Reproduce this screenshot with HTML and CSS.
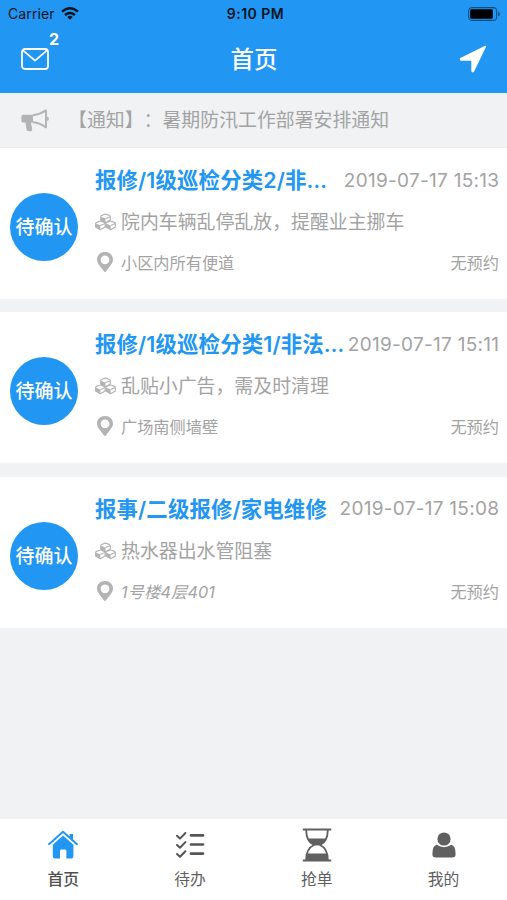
FILE: index.html
```html
<!DOCTYPE html>
<html lang="zh-CN">
<head>
    <meta charset="UTF-8">
    <meta name="viewport" content="width=device-width, initial-scale=1.0">
    <title>首页</title>
    <link rel="stylesheet" href="styles.css">
</head>
<body>

<!-- 公用图标 -->
<svg class="sprite" width="0" height="0">
    <symbol id="icon-cubes" viewBox="0 0 22 18">
        <g fill="#fff" stroke="#b3b3b3" stroke-width="1.2" stroke-linejoin="round">
            <path d="M6 3.4 Q6 2.6 7 2.2 L10 1 Q11 .6 12 1 L15 2.2 Q16 2.6 16 3.4 V7 L11 9.8 6 7Z"/>
            <path d="M.7 10.6 Q.7 9.8 1.6 9.4 L4.7 8.2 Q5.6 7.8 6.6 8.2 L9.6 9.4 Q10.6 9.8 10.6 10.6 V14.2 L5.6 17.2 .7 14.2Z"/>
            <path d="M11.4 10.6 Q11.4 9.8 12.4 9.4 L15.4 8.2 Q16.4 7.8 17.4 8.2 L20.4 9.4 Q21.3 9.8 21.3 10.6 V14.2 L16.4 17.2 11.4 14.2Z"/>
        </g>
        <path d="M6 3.4 L11 5.4 V9.8 L6 7.4Z M.7 10.6 L5.6 12.6 V17.2 L.7 14.6Z M11.4 10.6 L16.4 12.6 V17.2 L11.4 14.6Z" fill="#b3b3b3"/>
        <path d="M11 5.4 L16 3.4 M5.6 12.6 L10.6 10.6 M16.4 12.6 L21.3 10.6" stroke="#b3b3b3" stroke-width="1.1"/>
    </symbol>
    <symbol id="icon-pin" viewBox="0 0 16 20">
        <path fill-rule="evenodd" fill="#b3b3b3" d="M8 0 C3.4 0 0 3.3 0 7.6 C0 12 4.4 15.4 6.8 19.2 Q8 20.6 9.2 19.2 C11.6 15.4 16 12 16 7.6 C16 3.3 12.6 0 8 0Z M8 3.4 A4.4 4.4 0 1 1 8 12.2 A4.4 4.4 0 1 1 8 3.4Z"/>
    </symbol>
</svg>

<header>
    <div class="status-bar">
        <div class="carrier">
            <span>Carrier</span>
            <svg width="18" height="13" viewBox="0 0 18 13" fill="none" stroke="#061420" stroke-width="2.4">
                <path d="M1 4.7 Q9 -2.2 17 4.7"/>
                <path d="M4 8 Q9 3.8 14 8"/>
                <path d="M6.3 10 Q9 7.7 11.7 10 L9 12.8Z" fill="#061420" stroke="none"/>
            </svg>
        </div>
        <div class="clock">9:10 PM</div>
        <svg class="battery" width="33" height="14" viewBox="0 0 33 14">
            <rect x=".6" y=".6" width="28" height="12.8" rx="3.4" fill="none" stroke="#0f4f83" stroke-width="1.1"/>
            <rect x="2.2" y="2.2" width="22.6" height="9.6" rx="1.2" fill="#000"/>
            <path d="M30.2 4.8 Q32 5.6 32 7 Q32 8.4 30.2 9.2Z" fill="#0f4f83"/>
        </svg>
    </div>
    <div class="nav-bar">
        <div class="mail">
            <svg width="28" height="22" viewBox="0 0 28 22" fill="none" stroke="#fff" stroke-width="1.8" stroke-linejoin="round">
                <rect x="1" y="1" width="26" height="20" rx="3"/>
                <path d="M2 2.4 L14 12.6 26 2.4"/>
            </svg>
            <span class="badge">2</span>
        </div>
        <h1>首页</h1>
        <svg class="locate" width="28" height="28" viewBox="0 0 28 28">
            <path d="M26.4 1.4 L1.6 13.6 Q1.2 14.8 2 15 H13 V26 Q13.3 27.2 14.4 26.4Z" fill="#fff" stroke="#fff" stroke-width="1.4" stroke-linejoin="round"/>
        </svg>
    </div>
</header>

<div class="notice">
    <svg width="28" height="23" viewBox="0 0 28 23">
        <path d="M2 5.8 H12 V13.6 H10.4 Q9.6 15.6 10.8 17 L11.2 21.4 Q8.4 23.2 5.8 21.6 L4.4 13.6 H2 Q.4 13.6 .4 12 V7.4 Q.4 5.8 2 5.8Z" fill="#b3b3b3"/>
        <path d="M12 6.2 Q19 5.4 25 1.4 V18.4 Q19 14 12 13.3" fill="none" stroke="#b3b3b3" stroke-width="1.9" stroke-linejoin="round"/>
        <path d="M26 7.4 Q28 8 28 9.8 Q28 11.6 26 12Z" fill="#b3b3b3"/>
    </svg>
    <span class="notice-label">【通知】：</span>
    <span>暑期防汛工作部署安排通知</span>
</div>

<main>
    <div class="card">
        <div class="state">待确认</div>
        <div class="info">
            <div class="line title-line">
                <h2>报修/1级巡检分类2/非…</h2>
                <time>2019-07-17 15:13</time>
            </div>
            <div class="line desc">
                <svg class="cubes"><use href="#icon-cubes"/></svg>
                <span>院内车辆乱停乱放，提醒业主挪车</span>
            </div>
            <div class="line place">
                <svg class="pin"><use href="#icon-pin"/></svg>
                <span>小区内所有便道</span>
                <span class="booking">无预约</span>
            </div>
        </div>
    </div>

    <div class="card">
        <div class="state">待确认</div>
        <div class="info">
            <div class="line title-line">
                <h2>报修/1级巡检分类1/非法…</h2>
                <time>2019-07-17 15:11</time>
            </div>
            <div class="line desc">
                <svg class="cubes"><use href="#icon-cubes"/></svg>
                <span>乱贴小广告，需及时清理</span>
            </div>
            <div class="line place">
                <svg class="pin"><use href="#icon-pin"/></svg>
                <span>广场南侧墙壁</span>
                <span class="booking">无预约</span>
            </div>
        </div>
    </div>

    <div class="card">
        <div class="state">待确认</div>
        <div class="info">
            <div class="line title-line">
                <h2>报事/二级报修/家电维修</h2>
                <time>2019-07-17 15:08</time>
            </div>
            <div class="line desc">
                <svg class="cubes"><use href="#icon-cubes"/></svg>
                <span>热水器出水管阻塞</span>
            </div>
            <div class="line place">
                <svg class="pin"><use href="#icon-pin"/></svg>
                <em>1号楼4层401</em>
                <span class="booking">无预约</span>
            </div>
        </div>
    </div>
</main>

<!-- 底部导航 -->
<footer>
    <div class="tab active">
        <svg width="30" height="36" viewBox="0 0 30 36">
            <path d="M1 17.2 L15 4.8 29 17.2" fill="none" stroke="#2196f3" stroke-width="1.9" stroke-linecap="round" stroke-linejoin="round"/>
            <path d="M21.6 7 H25 V14 L21.6 11Z" fill="#2196f3"/>
            <path d="M15 8.6 L25.4 17.8 V29.6 Q25.4 31.4 23.6 31.4 H18.4 V23.8 Q18.4 22.4 17 22.4 H13.4 Q12 22.4 12 23.8 V31.4 H6.6 Q4.8 31.4 4.8 29.6 V17.8Z" fill="#2196f3"/>
        </svg>
        <span>首页</span>
    </div>
    <div class="tab">
        <svg width="30" height="36" viewBox="0 0 30 36" fill="none" stroke="#555" stroke-linecap="round" stroke-linejoin="round">
            <path d="M2 8.8 L5 11.6 10.4 6 M2 17.9 L5 20.7 10.4 15.1 M2 27 L5 29.8 10.4 24.2" stroke-width="2"/>
            <path d="M16 8.4 H28 M16 17.5 H28 M16 26.6 H28" stroke-width="2.7"/>
        </svg>
        <span>待办</span>
    </div>
    <div class="tab">
        <svg width="30" height="36" viewBox="0 0 30 36">
            <path d="M.8 2.4 H29.2 M.8 33.6 H29.2" stroke="#606060" stroke-width="2"/>
            <path d="M4.2 3 C4.2 11 6.6 15.6 12 18 C6.6 20.4 4.2 25 4.2 33 M25.8 3 C25.8 11 23.4 15.6 18 18 C23.4 20.4 25.8 25 25.8 33" fill="none" stroke="#606060" stroke-width="1.8"/>
            <path d="M5.4 11.4 H24.6 C23.2 15.4 21 17.2 17.8 18 Q15 18.8 12.2 18 C9 17.2 6.8 15.4 5.4 11.4Z M4.6 26.6 H25.4 L26 33.6 H4Z" fill="#606060"/>
        </svg>
        <span>抢单</span>
    </div>
    <div class="tab">
        <svg width="30" height="36" viewBox="0 0 30 36">
            <path d="M7.6 17.8 Q15 22.6 22.4 17.8 Q26.6 18.6 26.6 27 Q26.6 30.6 23.4 30.6 H6.6 Q3.4 30.6 3.4 27 Q3.4 18.6 7.6 17.8Z" fill="#606060"/>
            <circle cx="15" cy="12" r="6.6" fill="#606060"/>
        </svg>
        <span>我的</span>
    </div>
</footer>

</body>
</html>
```
FILE: styles.css
```css
* {
    box-sizing: border-box;
}
body {
    font-family: Inter, "Noto Sans CJK SC", sans-serif;
    text-spacing-trim: space-all;
    margin: 0;
    height: 900px;
    display: flex;
    flex-direction: column;
    background: #f0f2f4;
    color: #a3a3a3;
    overflow: hidden;
}
.sprite {
    position: absolute;
}
svg {
    display: block;
    flex-shrink: 0;
}
header {
    height: 93px;
    background: #2196f3;
    color: white;
}
.status-bar {
    height: 27px;
    padding: 0 6px 0 8px;
    display: grid;
    grid-template-columns: 1fr auto 1fr;
    align-items: center;
    color: #061420;
    font-size: 14px;
}
.carrier {
    display: flex;
    align-items: center;
    gap: 6px;
    letter-spacing: 0.1px;
}
.clock {
    padding-left: 2px;
    font-weight: 600;
    font-size: 14px;
    letter-spacing: 0.5px;
}
.battery {
    justify-self: end;
}
.nav-bar {
    height: 64px;
    padding: 0 20px 0 21px;
    display: grid;
    grid-template-columns: 1fr auto 1fr;
    align-items: center;
}
.mail {
    position: relative;
    width: 28px;
}
.badge {
    position: absolute;
    left: 28px;
    top: -19px;
    font-size: 16px;
    line-height: 20px;
    font-weight: 700;
}
h1 {
    margin: 0;
    padding-top: 2px;
    font-size: 23.5px;
    line-height: 34px;
    font-weight: 500;
}
.locate {
    justify-self: end;
}
.notice {
    height: 55px;
    padding-left: 21px;
    display: flex;
    align-items: center;
    border-bottom: 1px solid #ebecee;
    font-size: 18.9px;
}
.notice span {
    padding-bottom: 3px;
}
.notice-label {
    margin-left: 19px;
}
main {
    flex: 1;
    display: flex;
    flex-direction: column;
    gap: 13.4px;
}
.card {
    height: 151px;
    padding: 14px 8px 0 10px;
    display: flex;
    background: white;
}
.state {
    width: 68px;
    height: 68px;
    margin-top: 31px;
    padding-top: 1px;
    border-radius: 50%;
    background: #2196f3;
    color: white;
    font-size: 19px;
    font-weight: 500;
    line-height: 68px;
    text-align: center;
    flex-shrink: 0;
}
.info {
    flex: 1;
    min-width: 0;
    margin-left: 17px;
}
.line {
    display: flex;
    align-items: center;
    white-space: nowrap;
}
.title-line {
    height: 36px;
    justify-content: space-between;
}
h2 {
    margin: 0;
    color: #2196f3;
    font-size: 21.4px;
    line-height: 34px;
    font-weight: 600;
    letter-spacing: 0.15px;
}
time {
    flex-shrink: 0;
    font-size: 19px;
    letter-spacing: 0.28px;
    margin-right: -0.28px;
}
.desc {
    height: 48px;
    gap: 5px;
    font-size: 18.9px;
}
.desc span {
    padding-bottom: 3px;
}
.cubes {
    width: 21px;
    height: 18px;
}
.place {
    height: 32px;
    font-size: 16.2px;
}
.place em {
    letter-spacing: 0.15px;
}
.pin {
    width: 16px;
    height: 20px;
    margin: 0 8px 0 2px;
}
.booking {
    margin-left: auto;
}
footer {
    height: 81px;
    display: flex;
    background: white;
    color: #606060;
}
.tab {
    flex: 1;
    padding-top: 8px;
    display: flex;
    flex-direction: column;
    align-items: center;
    font-size: 15.8px;
    line-height: 24px;
}
.tab span {
    margin-top: 5px;
}
.tab.active {
    font-weight: 500;
    color: #505050;
}
```
